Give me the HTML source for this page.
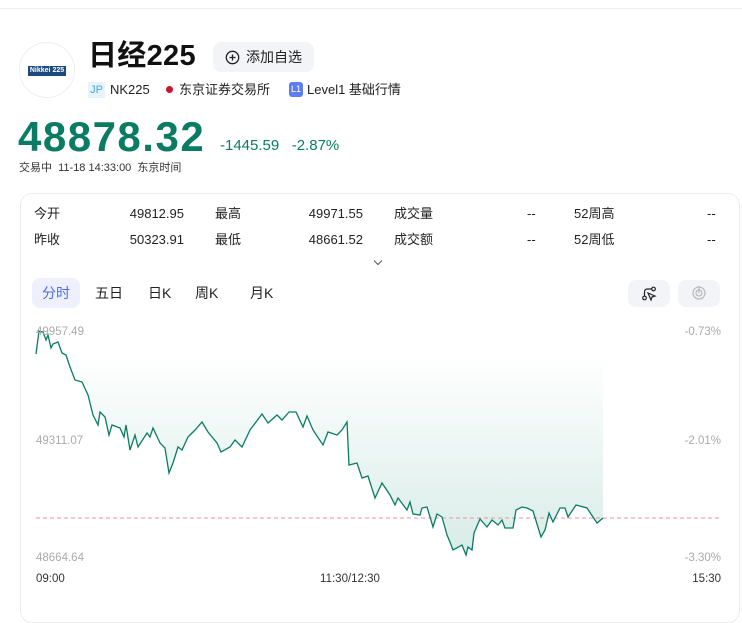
<!DOCTYPE html>
<html><head><meta charset="utf-8"><style>
*{margin:0;padding:0;box-sizing:border-box}
body{width:742px;height:612px;background:#fff;font-family:"Liberation Sans","Noto Sans CJK SC",sans-serif;color:#222;position:relative;overflow:hidden}
.a{position:absolute;white-space:nowrap}
.g{color:#0a7c64}
.lbl{font-size:13px;color:#222;line-height:16px;height:16px}
</style></head><body>
<div class="a" style="left:0;top:8px;width:742px;height:1px;background:#eee"></div>
<div class="a" style="left:19px;top:42px;width:56px;height:56px;border-radius:50%;border:1px solid #eee"></div>
<div class="a" style="left:28px;top:66px;width:38px;height:10px;background:#1c4a7e;color:#fff;font-size:7px;font-weight:bold;line-height:10px;text-align:center">Nikkei 225</div>
<div class="a" style="left:88px;top:38px;font-size:29px;font-weight:bold;color:#111;line-height:36px;letter-spacing:0.3px">日经225</div>
<div class="a" style="left:213px;top:42px;width:101px;height:30px;background:#f3f4f7;border-radius:8px;font-size:14px;line-height:30px;padding-left:33px;color:#222">添加自选</div>
<svg class="a" style="left:225px;top:50px" width="15" height="15"><circle cx="7.5" cy="7.5" r="6.2" fill="none" stroke="#222" stroke-width="1.3"/><path d="M7.5 4.5v6M4.5 7.5h6" stroke="#222" stroke-width="1.3"/></svg>
<div class="a" style="left:88px;top:82px;width:17px;height:16px;background:#e6f3fb;color:#4aa6d8;font-size:11px;line-height:16px;text-align:center">JP</div>
<div class="a" style="left:110px;top:81px;font-size:13px;line-height:18px">NK225</div>
<div class="a" style="left:166px;top:86px;width:7px;height:7px;border-radius:50%;background:#d0122d"></div>
<div class="a" style="left:179px;top:81px;font-size:13px;line-height:18px">东京证券交易所</div>
<div class="a" style="left:289px;top:82px;width:14px;height:15px;background:#5b7ff0;border-radius:3px;color:#fff;font-size:9px;line-height:15px;text-align:center">L1</div>
<div class="a" style="left:307px;top:81px;font-size:13px;line-height:18px">Level1 基础行情</div>
<div class="a g" style="left:18px;top:113px;font-size:42px;font-weight:bold;line-height:48px;letter-spacing:1.5px">48878.32</div>
<div class="a g" style="left:220px;top:137px;font-size:15px;line-height:18px">-1445.59&nbsp;&nbsp;&nbsp;-2.87%</div>
<div class="a" style="left:19px;top:160px;font-size:11px;line-height:16px;color:#333">交易中&nbsp;&nbsp;11-18 14:33:00&nbsp;&nbsp;东京时间</div>
<div class="a" style="left:20px;top:193px;width:720px;height:430px;border:1px solid #ececec;border-radius:12px"></div>
<div class="a lbl" style="left:34px;top:206px">今开</div>
<div class="a lbl g" style="left:94px;top:206px;width:90px;text-align:right">49812.95</div>
<div class="a lbl" style="left:215px;top:206px">最高</div>
<div class="a lbl g" style="left:273px;top:206px;width:90px;text-align:right">49971.55</div>
<div class="a lbl" style="left:394px;top:206px">成交量</div>
<div class="a lbl" style="left:527px;top:206px">--</div>
<div class="a lbl" style="left:574px;top:206px">52周高</div>
<div class="a lbl" style="left:707px;top:206px">--</div>
<div class="a lbl" style="left:34px;top:232px">昨收</div>
<div class="a lbl" style="left:94px;top:232px;width:90px;text-align:right">50323.91</div>
<div class="a lbl" style="left:215px;top:232px">最低</div>
<div class="a lbl g" style="left:273px;top:232px;width:90px;text-align:right">48661.52</div>
<div class="a lbl" style="left:394px;top:232px">成交额</div>
<div class="a lbl" style="left:527px;top:232px">--</div>
<div class="a lbl" style="left:574px;top:232px">52周低</div>
<div class="a lbl" style="left:707px;top:232px">--</div>
<svg class="a" style="left:373px;top:259px" width="10" height="7"><path d="M1 1.5l4 4 4-4" fill="none" stroke="#555" stroke-width="1"/></svg>
<div class="a" style="left:32px;top:278px;width:48px;height:30px;background:#eef1fd;border-radius:8px;color:#4d6bf0;font-size:14px;line-height:30px;text-align:center">分时</div>
<div class="a" style="left:95px;top:284px;font-size:14px;line-height:18px">五日</div>
<div class="a" style="left:148px;top:284px;font-size:14px;line-height:18px">日K</div>
<div class="a" style="left:195px;top:284px;font-size:14px;line-height:18px">周K</div>
<div class="a" style="left:250px;top:284px;font-size:14px;line-height:18px">月K</div>
<div class="a" style="left:628px;top:280px;width:42px;height:27px;background:#f3f4f7;border-radius:8px"></div>
<svg class="a" style="left:641px;top:286px" width="16" height="16"><circle cx="3.5" cy="12" r="1.8" fill="none" stroke="#222" stroke-width="1.2"/><circle cx="12.5" cy="3" r="1.8" fill="none" stroke="#222" stroke-width="1.2"/><path d="M3.5 10V6q0-3 3-3h4" fill="none" stroke="#222" stroke-width="1.2"/><path d="M7 7l7 3-3 1-1 3z" fill="none" stroke="#222" stroke-width="1.2"/></svg>
<div class="a" style="left:678px;top:280px;width:42px;height:27px;background:#f3f4f7;border-radius:8px"></div>
<svg class="a" style="left:691px;top:285px" width="16" height="16"><circle cx="8" cy="8" r="6" fill="none" stroke="#bbb" stroke-width="1.3"/><circle cx="8" cy="8" r="3" fill="none" stroke="#bbb" stroke-width="1.3"/><path d="M8 8V1" stroke="#bbb" stroke-width="1.3"/></svg>
<svg class="a" style="left:0;top:0" width="742" height="612">
<defs><linearGradient id="gr" x1="0" y1="355" x2="0" y2="555" gradientUnits="userSpaceOnUse"><stop offset="0" stop-color="#fff"/><stop offset="1" stop-color="#d8ece7"/></linearGradient></defs>
<polygon fill="url(#gr)" points="36,354 39,331 43,332 46,340 48,335 51,348 53,344 58,342 62,353 66,355 70,367 75,380 82,382 88,395 93,415 98,425 100,412 105,417 109,435 112,425 120,428 124,437 126,425 130,450 135,435 138,447 147,433 150,437 153,428 160,443 165,448 169,473 173,463 178,447 182,450 188,437 195,430 202,422 208,432 217,443 221,452 230,447 235,440 242,447 250,430 262,414 268,423 277,415 282,420 289,412 296,412 303,427 307,416 313,430 323,445 328,432 337,435 342,430 347,422 349,465 357,463 362,478 368,476 375,498 382,483 390,495 395,505 398,498 407,510 410,502 413,514 420,515 422,508 427,507 433,527 437,514 442,517 447,535 450,542 453,550 462,545 466,555 468,547 472,550 474,533 480,519 487,527 492,520 498,525 502,520 505,528 513,528 516,510 522,507 527,508 533,511 541,537 545,530 549,513 553,522 560,508 565,508 568,517 576,505 587,508 597,523 603,518 603,330 36,330"/>
<line x1="36" y1="518" x2="720" y2="518" stroke="#ec9598" stroke-width="1" stroke-dasharray="4,3"/>
<polyline fill="none" stroke="#0a7c64" stroke-width="1.3" points="36,354 39,331 43,332 46,340 48,335 51,348 53,344 58,342 62,353 66,355 70,367 75,380 82,382 88,395 93,415 98,425 100,412 105,417 109,435 112,425 120,428 124,437 126,425 130,450 135,435 138,447 147,433 150,437 153,428 160,443 165,448 169,473 173,463 178,447 182,450 188,437 195,430 202,422 208,432 217,443 221,452 230,447 235,440 242,447 250,430 262,414 268,423 277,415 282,420 289,412 296,412 303,427 307,416 313,430 323,445 328,432 337,435 342,430 347,422 349,465 357,463 362,478 368,476 375,498 382,483 390,495 395,505 398,498 407,510 410,502 413,514 420,515 422,508 427,507 433,527 437,514 442,517 447,535 450,542 453,550 462,545 466,555 468,547 472,550 474,533 480,519 487,527 492,520 498,525 502,520 505,528 513,528 516,510 522,507 527,508 533,511 541,537 545,530 549,513 553,522 560,508 565,508 568,517 576,505 587,508 597,523 603,518"/>
<g font-family="Liberation Sans,sans-serif" font-size="11.5" fill="#aaa">
<text x="36" y="335">49957.49</text><text x="36" y="444">49311.07</text><text x="36" y="561">48664.64</text>
<text x="721" y="335" text-anchor="end">-0.73%</text><text x="721" y="444" text-anchor="end">-2.01%</text><text x="721" y="561" text-anchor="end">-3.30%</text>
</g>
<g font-family="Liberation Sans,sans-serif" font-size="11.5" fill="#333">
<text x="36" y="582">09:00</text><text x="350" y="582" text-anchor="middle">11:30/12:30</text><text x="721" y="582" text-anchor="end">15:30</text>
</g>
</svg>
</body></html>
